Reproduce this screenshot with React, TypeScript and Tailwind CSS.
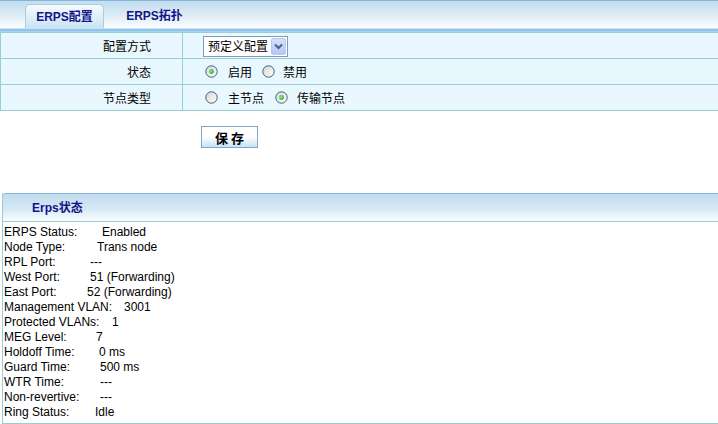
import React from "react";

function Radio({ checked }: { checked?: boolean }) {
  return (
    <svg width="13" height="13" viewBox="0 0 13 13" className="shrink-0">
      <defs>
        <linearGradient id="rbg" x1="0" y1="0" x2="1" y2="1">
          <stop offset="0" stopColor="#d6d6d0" />
          <stop offset="1" stopColor="#ffffff" />
        </linearGradient>
        <radialGradient id="rdot" cx="0.4" cy="0.4" r="0.7">
          <stop offset="0" stopColor="#8ef08a" />
          <stop offset="1" stopColor="#1f9a1f" />
        </radialGradient>
      </defs>
      <circle cx="6.5" cy="6.5" r="5.7" fill="url(#rbg)" stroke="#3c5f82" strokeWidth="1" />
      {checked && <circle cx="6.5" cy="6.5" r="2.4" fill="url(#rdot)" />}
    </svg>
  );
}

const lines: { label: string; value: string; w: string }[] = [
  { label: "ERPS Status:", value: "Enabled", w: "w-[98px]" },
  { label: "Node Type:", value: "Trans node", w: "w-[93px]" },
  { label: "RPL Port:", value: "---", w: "w-[86px]" },
  { label: "West Port:", value: "51 (Forwarding)", w: "w-[86px]" },
  { label: "East Port:", value: "52 (Forwarding)", w: "w-[83px]" },
  { label: "Management VLAN:", value: "3001", w: "w-[120px]" },
  { label: "Protected VLANs:", value: "1", w: "w-[108px]" },
  { label: "MEG Level:", value: "7", w: "w-[92px]" },
  { label: "Holdoff Time:", value: "0 ms", w: "w-[95px]" },
  { label: "Guard Time:", value: "500 ms", w: "w-[96px]" },
  { label: "WTR Time:", value: "---", w: "w-[96px]" },
  { label: "Non-revertive:", value: "---", w: "w-[96px]" },
  { label: "Ring Status:", value: "Idle", w: "w-[91px]" },
];

export default function App() {
  const cjk = "font-['Noto_Sans_CJK_SC','Liberation_Sans',sans-serif]";
  return (
    <div className="w-[718px] h-[424px] bg-white text-[12px] text-black font-['Liberation_Sans','Noto_Sans_CJK_SC',sans-serif] overflow-hidden">
      {/* Tab bar */}
      <div className="border-t border-[#82b5dc]">
        <div className="h-[27px] bg-gradient-to-b from-[#c2dcee] via-[#dcebf5] to-[#fbfdfe] flex items-end pl-[25px]">
          <div className="h-[24px] w-[79px] rounded-t-[5px] border border-b-0 border-[#a6d0da] bg-gradient-to-b from-[#f6fbfd] to-[#c9e3f5] flex items-center justify-center font-bold text-[#14148a] leading-none">
            ERPS配置
          </div>
          <div className="h-[24px] w-[79px] ml-[11px] flex items-center justify-center font-bold text-[#14148a] leading-none">
            ERPS拓扑
          </div>
        </div>
        <div className="h-[1px] bg-[#c8e4f8]" />
        <div className="h-[2px] bg-[#8ec4ee]" />
        <div className="h-[1px] bg-[#a9d3e6]" />
      </div>

      {/* Config table */}
      <div className={`border-l border-t border-[#97cfd2] bg-[#e9f8fe] ${cjk}`}>
        <div className="flex h-[26px] border-b border-[#97cfd2]">
          <div className="w-[182px] border-r border-[#97cfd2] flex items-center justify-end pr-[31px]">配置方式</div>
          <div className="flex items-center pl-[20px]">
            <div className="h-[21px] w-[85px] border border-[#7f9db9] bg-white flex items-center pl-[4px] pr-[1px] mt-[1px]">
              <span className="flex-1 leading-none">预定义配置</span>
              <div className="h-[17px] w-[15px] rounded-[2px] border border-[#b6c8ef] bg-gradient-to-b from-[#d4e0fb] to-[#b5c8f4] flex items-center justify-center">
                <svg width="9" height="7" viewBox="0 0 9 7">
                  <path d="M1 1.5 L4.5 5 L8 1.5" fill="none" stroke="#4a5f8a" strokeWidth="2" />
                </svg>
              </div>
            </div>
          </div>
        </div>
        <div className="flex h-[26px] border-b border-[#97cfd2]">
          <div className="w-[182px] border-r border-[#97cfd2] flex items-center justify-end pr-[31px]">状态</div>
          <div className="flex items-center pl-[22px]">
            <Radio checked />
            <span className="ml-[10px]">启用</span>
            <span className="ml-[10px]"><Radio /></span>
            <span className="ml-[8px]">禁用</span>
          </div>
        </div>
        <div className="flex h-[26px] border-b border-[#97cfd2]">
          <div className="w-[182px] border-r border-[#97cfd2] flex items-center justify-end pr-[31px]">节点类型</div>
          <div className="flex items-center pl-[22px]">
            <Radio />
            <span className="ml-[10px]">主节点</span>
            <span className="ml-[11px]"><Radio checked /></span>
            <span className="ml-[9px]">传输节点</span>
          </div>
        </div>
      </div>

      {/* Save button */}
      <div className="pt-[15px] pl-[201px]">
        <button className={`h-[22px] w-[57px] border border-[#7ea7c8] bg-gradient-to-b from-white via-white to-[#c4e2f7] font-bold text-[13px] text-black leading-none flex items-center justify-center ${cjk}`}>
          保&nbsp;存
        </button>
      </div>

      {/* Status panel */}
      <div className="mt-[45px] ml-[2px] border-l border-b border-[#97cfd2]">
        <div className="h-[29px] border-t border-b border-t-[#7eb3da] border-b-[#97cfd2] rounded-tl-[3px] bg-gradient-to-b from-[#c3ddef] via-[#d3e6f3] to-[#fbfdfe] flex items-center pl-[29px] font-bold text-[#14148a]">
          Erps状态
        </div>
        <div className="pl-[1px] pt-[3px] pb-[3px] leading-[15px]">
          {lines.map((l) => (
            <div key={l.label} className="flex whitespace-nowrap">
              <span className={`${l.w} shrink-0`}>{l.label}</span>
              <span>{l.value}</span>
            </div>
          ))}
        </div>
      </div>
    </div>
  );
}
